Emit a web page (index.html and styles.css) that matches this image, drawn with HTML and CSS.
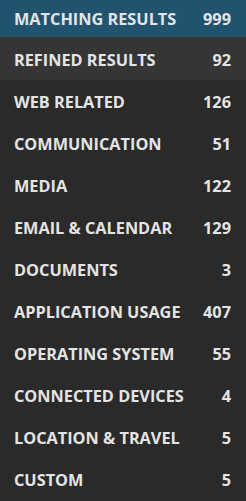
FILE: index.html
```html
<!DOCTYPE html>
<html lang="en">
<head>
  <meta charset="UTF-8">
  <title>Results</title>
  <link rel="stylesheet" href="styles.css">
</head>
<body>
  <ul class="categories">
    <li class="row matching"><span>MATCHING RESULTS</span><span>999</span></li>
    <li class="row refined"><span>REFINED RESULTS</span><span>92</span></li>
    <li class="row"><span>WEB RELATED</span><span>126</span></li>
    <li class="row"><span>COMMUNICATION</span><span>51</span></li>
    <li class="row"><span>MEDIA</span><span>122</span></li>
    <li class="row"><span>EMAIL &amp; CALENDAR</span><span>129</span></li>
    <li class="row"><span>DOCUMENTS</span><span>3</span></li>
    <li class="row"><span>APPLICATION USAGE</span><span>407</span></li>
    <li class="row"><span>OPERATING SYSTEM</span><span>55</span></li>
    <li class="row"><span>CONNECTED DEVICES</span><span>4</span></li>
    <li class="row"><span>LOCATION &amp; TRAVEL</span><span>5</span></li>
    <li class="row"><span>CUSTOM</span><span>5</span></li>
  </ul>
</body>
</html>
```

FILE: styles.css
```css
body {
  margin: 0;
  background-color: #2a2a2a;
  font-family: "Open Sans", "Noto Sans", sans-serif;
  color: #e4e4e4;
}

.categories {
  list-style: none;
  margin: 0;
  padding: 0;
}

.row {
  display: flex;
  justify-content: space-between;
  align-items: center;
  height: 42px;
  padding: 1px 15px 0 14px;
  box-sizing: border-box;
  font-size: 16.3px;
  font-weight: 700;
}

.matching {
  height: 37px;
  padding-top: 0;
  background-color: #21536f;
}

.refined {
  height: 43px;
  padding-top: 3px;
  background-color: #353535;
}
```
